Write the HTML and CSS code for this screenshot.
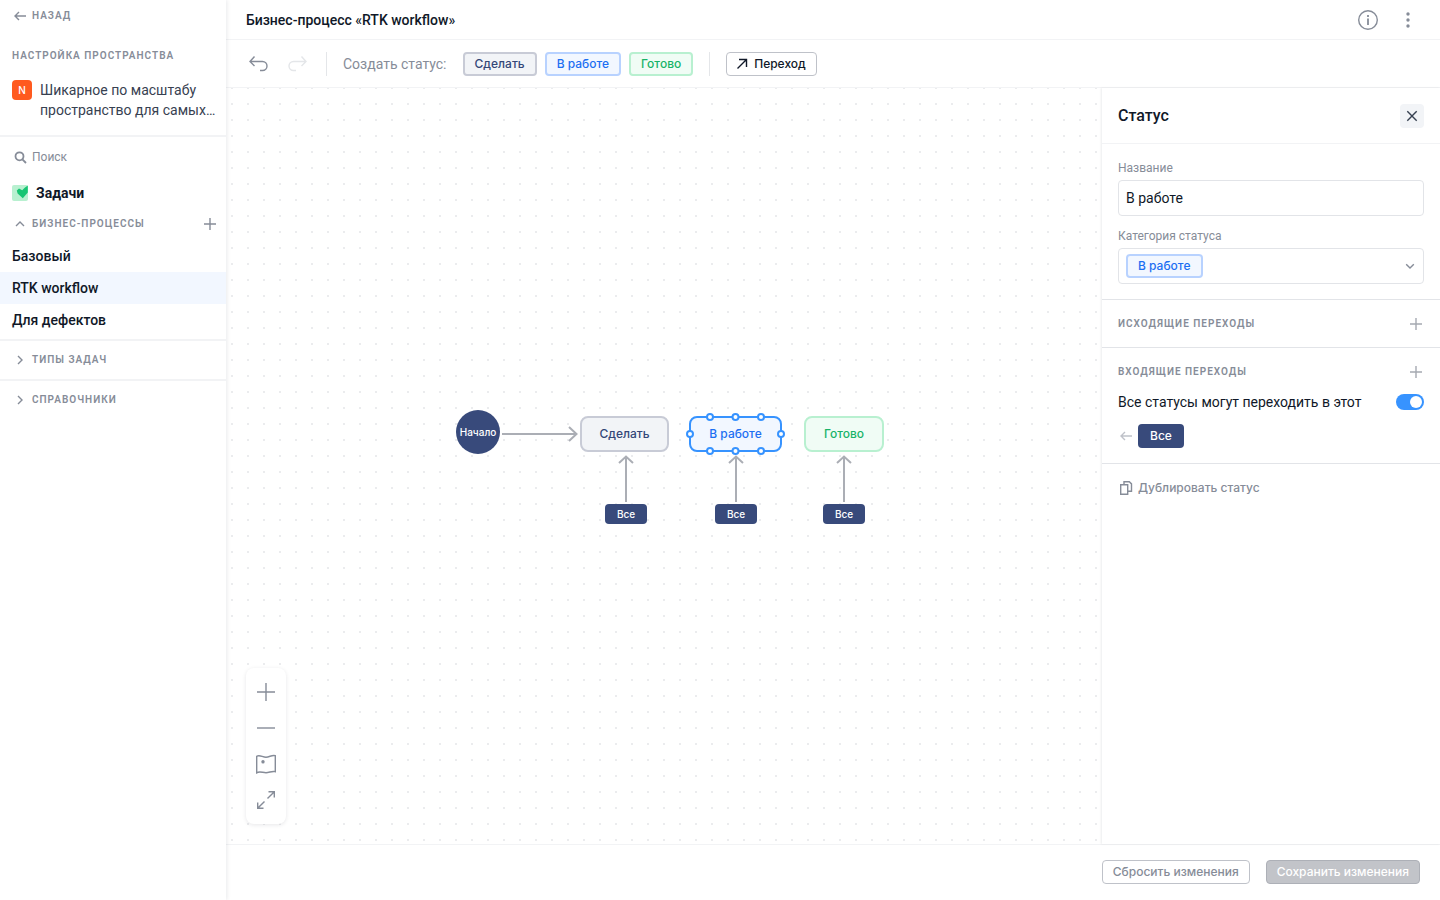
FILE: index.html
```html
<!DOCTYPE html>
<html lang="ru">
<head>
<meta charset="utf-8">
<title>Бизнес-процесс «RTK workflow»</title>
<link rel="stylesheet" href="styles.css">
</head>
<body>
<div class="app">
  <aside class="sidebar">
    <a class="back caps" href="#"><svg width="16" height="16" viewBox="0 0 16 16"><path d="M14 8H3M7 4L3 8l4 4"/></svg>Назад</a>
    <h2 class="space-title caps">Настройка пространства</h2>
    <div class="space">
      <span class="space-logo">N</span>
      <span class="space-name">Шикарное по масштабу пространство для самых…</span>
    </div>
    <label class="search">
      <svg width="16" height="16" viewBox="0 0 16 16"><circle cx="7.500" cy="7.300" r="4"/><path d="M10.400 10.300L14 14"/></svg>
      <input type="text" placeholder="Поиск" aria-label="Поиск">
    </label>
    <div class="module">
      <svg class="module-logo" width="16" height="16" viewBox="0 0 16 16"><rect width="16" height="16" rx="2" fill="#b8f0d0"/><path d="M4.800 5.600L7 3.600l3.200 1.600L13 2.600 15.800.4V7.400L10.800 13.300 5.600 8.600z" fill="#18c573"/></svg>
      Задачи
    </div>
    <div class="group-head">
      <button class="group-toggle caps" type="button"><svg width="16" height="16" viewBox="0 0 16 16"><path d="M4 10l4-4 4 4"/></svg>Бизнес-процессы</button>
      <button class="icon-btn" type="button" aria-label="Добавить процесс"><svg width="16" height="16" viewBox="0 0 16 16"><path d="M8 2v12M2 8h12"/></svg></button>
    </div>
    <nav class="processes">
      <a href="#">Базовый</a>
      <a class="current" href="#">RTK workflow</a>
      <a href="#">Для дефектов</a>
    </nav>
    <div class="group"><button class="group-toggle caps" type="button"><svg width="16" height="16" viewBox="0 0 16 16"><path d="M6 4l4 4-4 4"/></svg>Типы задач</button></div>
    <div class="group"><button class="group-toggle caps" type="button"><svg width="16" height="16" viewBox="0 0 16 16"><path d="M6 4l4 4-4 4"/></svg>Справочники</button></div>
  </aside>

  <main class="main">
    <header class="topbar">
      <h1>Бизнес-процесс «RTK workflow»</h1>
      <button class="icon-btn" type="button" aria-label="Информация"><svg width="24" height="24" viewBox="0 0 24 24"><circle cx="12" cy="12" r="9.300"/><path d="M12 10.500V17M12 7v2" stroke-width="1.800"/></svg></button>
      <button class="icon-btn" type="button" aria-label="Ещё"><svg width="24" height="24" viewBox="0 0 24 24"><g class="solid"><circle cx="12" cy="6" r="1.700"/><circle cx="12" cy="12" r="1.700"/><circle cx="12" cy="18" r="1.700"/></g></svg></button>
    </header>
    <div class="toolbar">
      <button class="icon-btn" type="button" aria-label="Отменить"><svg width="24" height="24" viewBox="0 0 24 24"><path d="M8.500 4.500L4 9.500l4.500 4.500M4 9.500h12.500a4.500 4.500 0 0 1 0 9H14"/></svg></button>
      <button class="icon-btn faded" type="button" aria-label="Повторить" disabled><svg width="24" height="24" viewBox="0 0 24 24"><path d="M15.500 4.500L20 9.500l-4.500 4.500M20 9.500H7.500a4.500 4.500 0 0 0 0 9H10"/></svg></button>
      <span class="divider"></span>
      <span class="toolbar-label">Создать статус:</span>
      <div class="statuses">
        <button class="chip todo" type="button">Сделать</button>
        <button class="chip doing" type="button">В работе</button>
        <button class="chip done" type="button">Готово</button>
      </div>
      <span class="divider"></span>
      <button class="btn transition" type="button"><svg width="16" height="16" viewBox="0 0 16 16"><path d="M3.500 12.500L12.500 3.500M5 3.500h7.500v7.500"/></svg>Переход</button>
    </div>

    <div class="workspace">
      <section class="canvas">
        <svg class="edges">
          <path d="M276 346h74M343 339l7.500 7-7.500 7"/>
          <path d="M400 414v-45M393 375l7-6.500 7 6.500"/>
          <path d="M510 414v-45M503 375l7-6.500 7 6.500"/>
          <path d="M618 414v-45M611 375l7-6.500 7 6.500"/>
        </svg>
        <div class="start">Начало</div>
        <div class="node todo n-todo">Сделать</div>
        <div class="node doing n-doing">В работе</div>
        <div class="node done n-done">Готово</div>
        <div class="any a-todo">Все</div>
        <div class="any a-doing">Все</div>
        <div class="any a-done">Все</div>
        <svg class="handles">
          <circle cx="484" cy="329" r="3"/><circle cx="509.500" cy="329" r="3"/><circle cx="535" cy="329" r="3"/>
          <circle cx="464" cy="346" r="3"/><circle cx="555" cy="346" r="3"/>
          <circle cx="484" cy="363" r="3"/><circle cx="509.500" cy="363" r="3"/><circle cx="535" cy="363" r="3"/>
        </svg>
        <div class="zoom">
          <button class="icon-btn" type="button" aria-label="Приблизить"><svg width="24" height="24" viewBox="0 0 24 24"><path d="M12 3v18M3 12h18"/></svg></button>
          <button class="icon-btn" type="button" aria-label="Отдалить"><svg width="24" height="24" viewBox="0 0 24 24"><path d="M3 12h18"/></svg></button>
          <button class="icon-btn" type="button" aria-label="Карта"><svg width="24" height="24" viewBox="0 0 24 24"><path d="M2.700 4.300C5.500 2.300 8.500 5.200 12 5.200s6-2.600 9.300-1.500v16c-3.300-1.100-5.800 1-9.300 1s-6.500-1.700-9.300.1z"/><circle class="solid" cx="9" cy="9.800" r="1.700"/></svg></button>
          <button class="icon-btn" type="button" aria-label="Вписать в экран"><svg width="24" height="24" viewBox="0 0 24 24"><path d="M13.500 10.500l6.800-6.800M14.500 3.700h5.800v5.800M10.500 13.500l-6.800 6.800M3.700 14.500v5.800h5.800"/></svg></button>
        </div>
      </section>

      <aside class="panel">
        <div class="panel-head">
          <h2>Статус</h2>
          <button class="close" type="button" aria-label="Закрыть"><svg width="16" height="16" viewBox="0 0 16 16"><path d="M3.300 3.300l9.400 9.400M12.700 3.300l-9.400 9.400"/></svg></button>
        </div>
        <div class="panel-section fields">
          <label class="field-label" for="name">Название</label>
          <input class="field" id="name" type="text" value="В работе">
          <label class="field-label" for="category">Категория статуса</label>
          <div class="field select-field">
            <select class="chip doing" id="category"><option>В работе</option></select>
            <svg width="16" height="16" viewBox="0 0 16 16"><path d="M4.200 6.200L8 10l3.800-3.800"/></svg>
          </div>
        </div>
        <div class="panel-section">
          <div class="section-head">
            <h3 class="caps">Исходящие переходы</h3>
            <button class="icon-btn" type="button" aria-label="Добавить исходящий переход"><svg width="16" height="16" viewBox="0 0 16 16"><path d="M8 2v12M2 8h12"/></svg></button>
          </div>
        </div>
        <div class="panel-section">
          <div class="section-head">
            <h3 class="caps">Входящие переходы</h3>
            <button class="icon-btn" type="button" aria-label="Добавить входящий переход"><svg width="16" height="16" viewBox="0 0 16 16"><path d="M8 2v12M2 8h12"/></svg></button>
          </div>
          <div class="switch-row">
            <label for="all">Все статусы могут переходить в этот</label>
            <input class="switch" id="all" type="checkbox" checked>
          </div>
          <div class="from">
            <svg width="16" height="16" viewBox="0 0 16 16"><path d="M14 8H3M7 4L3 8l4 4"/></svg>
            <span class="tag">Все</span>
          </div>
        </div>
        <button class="duplicate" type="button"><svg width="16" height="16" viewBox="0 0 16 16"><path d="M2.700 4.700h7v9.600h-7zM6 4V1.700h5.300l2.200 2.200v7.400h-3.200"/></svg>Дублировать статус</button>
      </aside>
    </div>

    <footer class="footer">
      <button class="btn reset" type="button">Сбросить изменения</button>
      <button class="btn save" type="button" disabled>Сохранить изменения</button>
    </footer>
  </main>
</div>
</body>
</html>
```
FILE: styles.css
```css
* { box-sizing: border-box; }

body {
  margin: 0;
  font: 14px/20px Roboto, "Liberation Sans", sans-serif;
  color: #101828;
  background: #fff;
}

button, input, select { font: inherit; color: inherit; }
button { padding: 0; border: 0; background: none; }
a { color: inherit; text-decoration: none; }
h1, h2, h3 { margin: 0; font-size: 14px; font-weight: 500; }

svg {
  flex: none;
  fill: none;
  stroke: currentColor;
  stroke-width: 1.4;
}
.solid { fill: currentColor; stroke: none; }

.app { display: flex; min-height: 100vh; }

.caps {
  font-size: 10px;
  line-height: 16px;
  font-weight: 600;
  letter-spacing: 1px;
  text-transform: uppercase;
  color: #868c98;
}

.icon-btn { display: flex; color: #868c98; }
.icon-btn.faded { color: #e4e6e9; }

/* Sidebar */
.sidebar {
  z-index: 1;
  flex: none;
  width: 226px;
  box-shadow: 1px 0 4px rgba(16, 24, 40, .09);
  background: #fff;
}
.back {
  display: flex;
  align-items: center;
  gap: 4px;
  height: 32px;
  padding: 0 12px;
}
.space-title { padding: 16px 12px; }
.space {
  display: flex;
  gap: 8px;
  padding: 0 4px 15px 12px;
  border-bottom: 2px solid #f2f3f5;
  color: #374151;
}
.space-logo {
  flex: none;
  width: 20px;
  height: 20px;
  border-radius: 4px;
  background: #ff5a1f;
  color: #fff;
  font-size: 10px;
  font-weight: 500;
  text-align: center;
}
.search {
  display: flex;
  align-items: center;
  gap: 4px;
  height: 40px;
  padding: 0 12px;
  font-size: 12px;
  color: #868c98;
}
.search svg { stroke-width: 1.8; }
.search input { width: 100%; padding: 0; border: 0; outline: 0; background: none; }
.search input::placeholder { color: #868c98; }
.module {
  display: flex;
  align-items: center;
  gap: 8px;
  height: 32px;
  padding: 0 12px;
  font-weight: 700;
}
.module-logo { stroke: none; }
.group-head {
  display: flex;
  align-items: center;
  justify-content: space-between;
  height: 30px;
  padding: 0 8px 0 12px;
}
.group-toggle { display: flex; align-items: center; gap: 4px; }
.processes { padding: 1px 0 3px; }
.processes a { display: block; padding: 6px 12px; font-weight: 500; }
.processes .current { background: #f2f7ff; }
.group {
  display: flex;
  height: 40px;
  padding: 0 12px;
  border-top: 2px solid #f2f3f5;
}

/* Header and toolbar */
.main { flex: 1; display: flex; flex-direction: column; min-width: 0; }
.topbar {
  display: flex;
  align-items: center;
  gap: 16px;
  height: 40px;
  padding: 0 20px;
  border-bottom: 1px solid #f2f3f5;
}
.topbar h1 { flex: 1; }
.toolbar {
  display: flex;
  align-items: center;
  gap: 16px;
  height: 48px;
  padding: 0 20px;
  border-bottom: 1px solid #f2f3f5;
}
.divider { width: 1px; height: 24px; background: #e4e6e9; }
.toolbar-label { color: #868c98; }
.statuses { display: flex; gap: 8px; }

.chip, .btn, .node, .start, .any, .tag, .duplicate, .space-logo {
  font-family: Inter, "Liberation Sans", sans-serif;
}

.chip {
  height: 24px;
  padding: 0 10px;
  border: 2px solid;
  border-radius: 4px;
  font-size: 12px;
  line-height: 20px;
  font-weight: 500;
}
.todo { background: #f2f4f7; border-color: #c8cbd6; color: #344777; }
.doing { background: #f2f7ff; border-color: #b8d2ff; color: #1d6ff2; }
.done { background: #f0fcf5; border-color: #b8f0d0; color: #18b368; }

.btn {
  display: flex;
  align-items: center;
  height: 24px;
  padding: 0 10px;
  border: 1px solid #bfc2c9;
  border-radius: 4px;
  font-size: 12px;
  font-weight: 500;
}
.transition { gap: 4px; padding: 0 10px 0 7px; }

/* Canvas */
.workspace { flex: 1; display: flex; }
.canvas {
  position: relative;
  flex: 1;
  background: radial-gradient(circle at 1px 1px, #ebecee 1px, transparent 1px) 5px -1px / 16px 16px;
}
.edges, .handles { position: absolute; inset: 0; width: 100%; height: 100%; pointer-events: none; }
.edges { stroke: #abaeb5; stroke-width: 2; }
.handles { stroke: #3793ff; stroke-width: 2; fill: #fff; }

.start, .node, .any {
  position: absolute;
  display: flex;
  align-items: center;
  justify-content: center;
  font-weight: 500;
}
.start {
  left: 230px;
  top: 322px;
  width: 44px;
  height: 44px;
  border-radius: 50%;
  background: #384a7b;
  color: #fff;
  font-size: 10px;
}
.node { top: 328px; height: 36px; border: 2px solid; border-radius: 8px; font-size: 12px; }
.node.todo { background: #f2f4f7; border-color: #c8cbd6; }
.node.doing { border-color: #3793ff; }
.node.done { border-color: #b8f0d0; }
.n-todo { left: 354px; width: 89px; }
.n-doing { left: 463px; width: 93px; }
.n-done { left: 578px; width: 80px; }
.any {
  top: 416px;
  width: 42px;
  height: 20px;
  border-radius: 4px;
  background: #384a7b;
  color: #fff;
  font-size: 10px;
}
.a-todo { left: 379px; }
.a-doing { left: 489px; }
.a-done { left: 597px; }

.zoom {
  position: absolute;
  left: 20px;
  bottom: 20px;
  display: flex;
  flex-direction: column;
  gap: 12px;
  padding: 12px 8px;
  border-radius: 8px;
  background: #fff;
  box-shadow: 0 1px 4px rgba(16, 24, 40, .1);
}

/* Status panel */
.panel {
  z-index: 1;
  flex: none;
  width: 338px;
  background: #fff;
  box-shadow: -1px 0 2px rgba(16, 24, 40, .08);
}
.panel-head {
  display: flex;
  align-items: center;
  justify-content: space-between;
  height: 56px;
  padding: 0 16px;
  border-bottom: 1px solid #f2f3f5;
}
.panel-head h2 { font-size: 16px; }
.close {
  display: flex;
  padding: 4px;
  border-radius: 4px;
  background: #f2f4f7;
  color: #374151;
}
.panel-section { padding: 15px 16px; border-bottom: 1px solid #e2e4e8; }
.fields { display: flex; flex-direction: column; padding-top: 16px; }
.field-label { padding-bottom: 4px; font-size: 12px; line-height: 16px; color: #868c98; }
.field {
  width: 100%;
  height: 36px;
  padding: 0 7px;
  border: 1px solid #e2e4e8;
  border-radius: 4px;
  background: #fff;
}
.field + .field-label { padding-top: 12px; }
.select-field { display: flex; align-items: center; justify-content: space-between; padding-right: 5px; color: #868c98; }
.select-field select { appearance: none; color: #1d6ff2; }
.section-head { display: flex; align-items: center; justify-content: space-between; height: 17px; }
.section-head .icon-btn { color: #a5a9b1; }
.switch-row { display: flex; align-items: center; justify-content: space-between; margin-top: 12px; }
.switch {
  appearance: none;
  display: flex;
  justify-content: flex-end;
  width: 28px;
  height: 16px;
  margin: 0;
  padding: 2px;
  border-radius: 8px;
  background: #3793ff;
}
.switch::before { content: ""; width: 12px; height: 12px; border-radius: 50%; background: #fff; }
.switch:not(:checked) { justify-content: flex-start; background: #bfc2c9; }
.from { display: flex; align-items: center; gap: 4px; margin-top: 12px; color: #bfc2c9; }
.tag {
  padding: 2px 12px;
  border-radius: 4px;
  background: #384a7b;
  color: #fff;
  font-size: 12px;
  font-weight: 500;
}
.duplicate {
  display: flex;
  align-items: center;
  gap: 4px;
  padding: 14px 16px;
  font-size: 12px;
  font-weight: 500;
  color: #868c98;
}

/* Footer */
.footer {
  display: flex;
  align-items: center;
  justify-content: flex-end;
  gap: 16px;
  height: 56px;
  padding: 0 20px 1px;
  border-top: 1px solid #f2f3f5;
}
.reset { color: #868c98; }
.save { border-color: #adb0b7; background: #c2c4c9; color: #fff; }
```
